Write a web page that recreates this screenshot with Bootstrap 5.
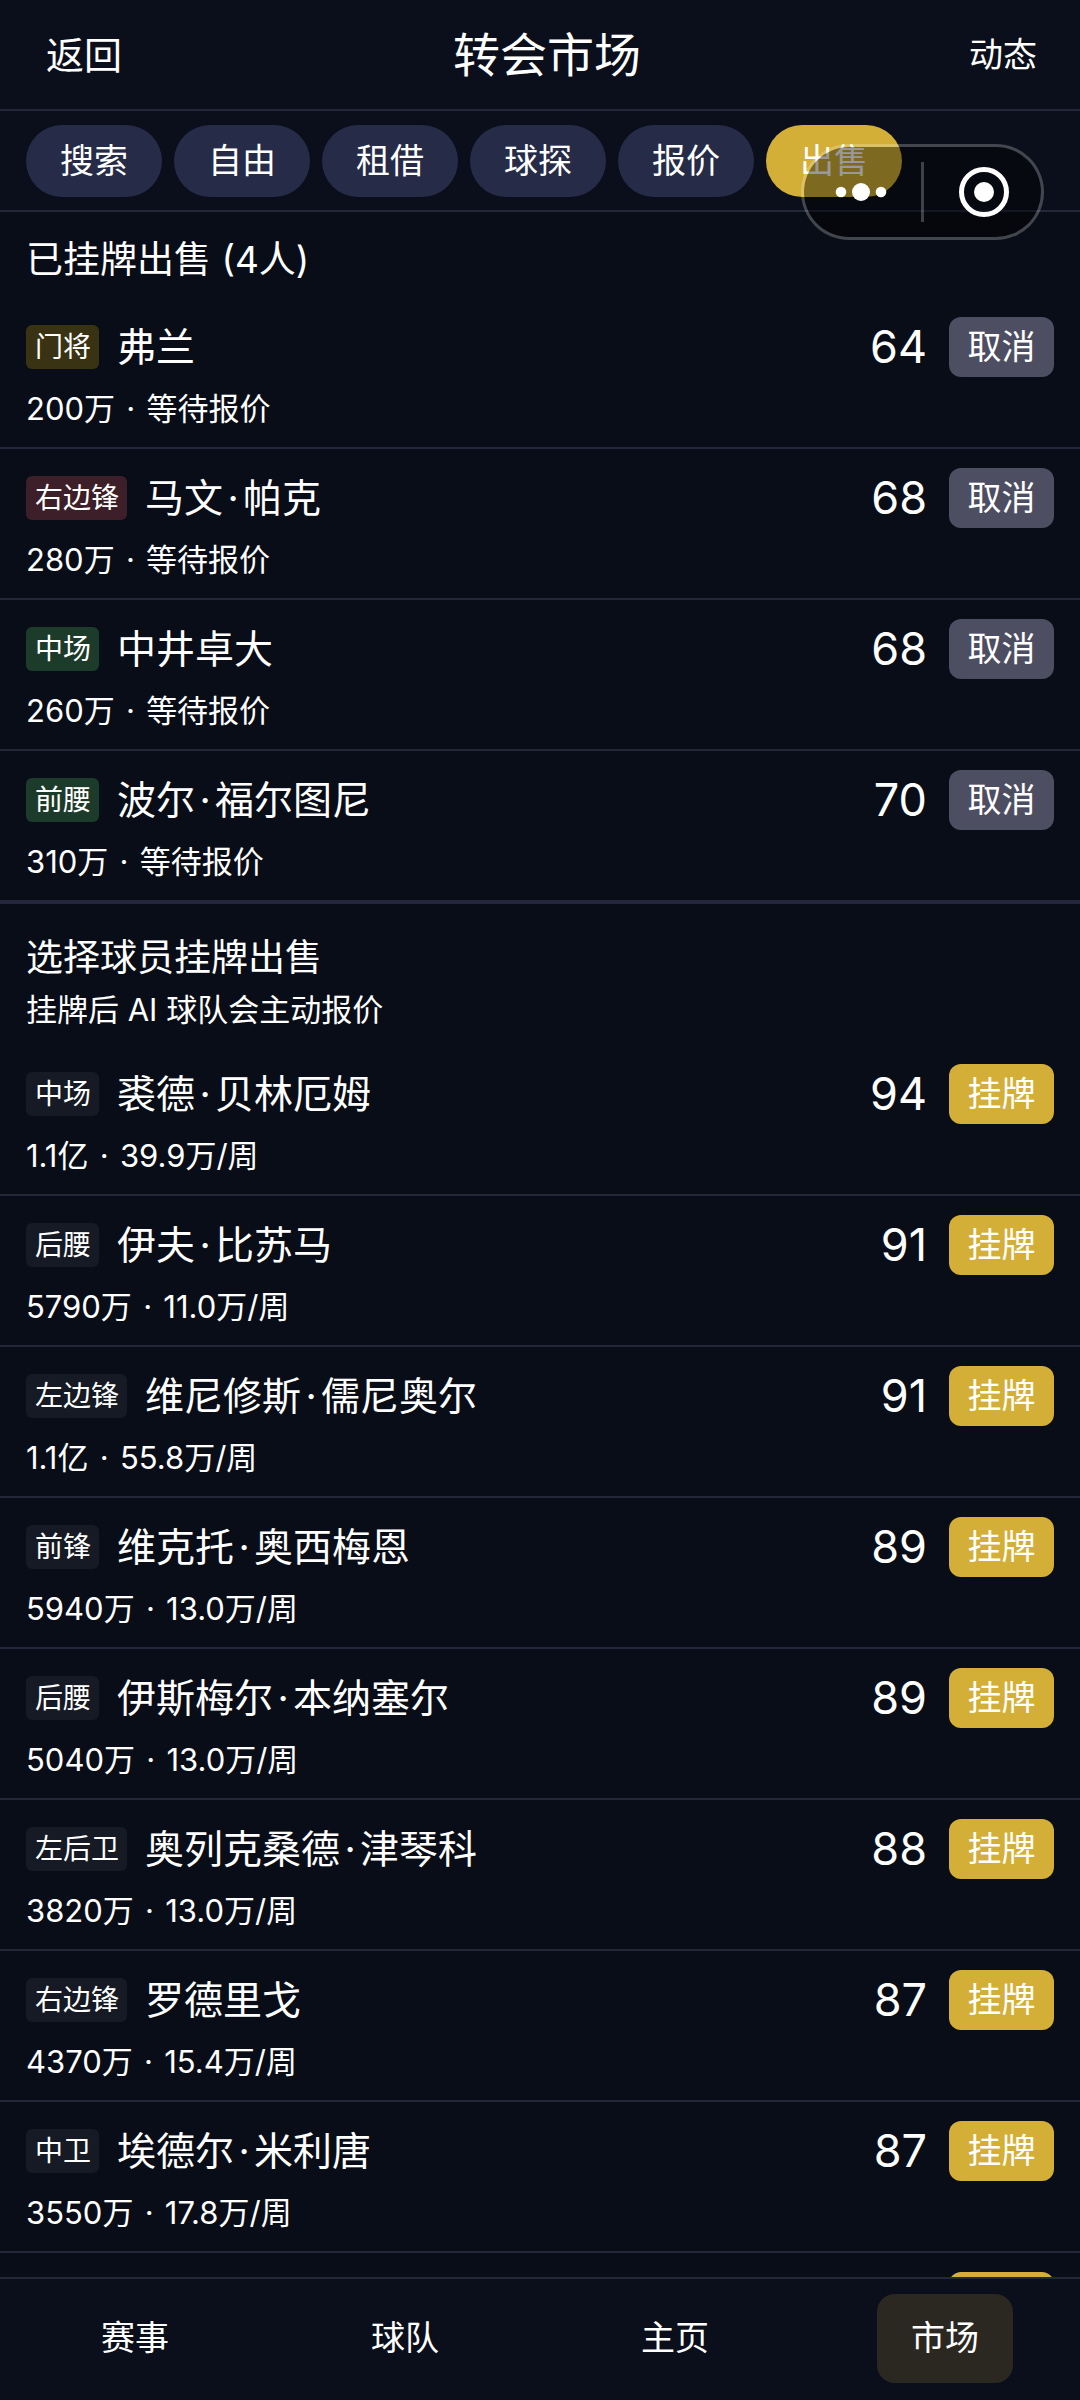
<!DOCTYPE html>
<html lang="zh-CN">
<head>
<meta charset="utf-8">
<meta name="viewport" content="width=device-width, initial-scale=1">
<title>转会市场</title>
<link href="https://cdn.jsdelivr.net/npm/bootstrap@5.3.0/dist/css/bootstrap.min.css" rel="stylesheet">
<style>
  :root { --line: #22273a; --gold: #d3af37; }
  body { background: #090d17; color: #fff; font-family: Inter, "Noto Sans CJK SC", sans-serif; font-size: 34px; line-height: 48px; }
  .btn { --bs-btn-color: #fff; --bs-btn-hover-color: #fff; --bs-btn-active-color: #fff; --bs-btn-border-width: 0; font-size: 34px; line-height: 48px; white-space: nowrap; }
  .topbar, .tabs, .bottombar { background: #0b0f1b; }
  .topbar { height: 111px; padding: 0 26px; border-bottom: 2px solid var(--line); }
  .topbar h1 { font-size: 47px; line-height: 64px; font-weight: 400; }
  .back-btn { font-size: 38px; padding: 0 20px; }
  .feed-btn { padding: 0 17px; }
  .tabs { padding: 14px 26px 13px; gap: 12px; border-bottom: 2px solid var(--line); }
  .tab-pill { padding: 12px 34px; background: #262c47; }
  .tab-pill.active, .list-btn { background: var(--gold) !important; }
  .feed { scrollbar-width: none; }
  .feed::-webkit-scrollbar { display: none; }
  .feed h2 { font-size: 37px; line-height: 48px; font-weight: 400; }
  .head-listed { padding: 24px 26px 14px; }
  .head-pick { padding: 30px 26px 11px; border-top: 2px solid #23283e; }
  .note { font-size: 31px; line-height: 48px; }
  .player { padding: 19px 26px 14px; border-bottom: 2px solid var(--line); }
  .player-name { font-size: 39px; line-height: 60px; }
  .pos { font-size: 28px; line-height: 44px; padding: 0 8px 0 9px; border-radius: 6px; margin-right: 18px; background: #151a25; }
  .pos-gk { background: #393213; }
  .pos-fw { background: #3c1f28; }
  .pos-mf { background: #1d3b2a; }
  .rating { font-size: 45px; line-height: 60px; margin-right: 22px; }
  .row-btn { min-width: 105px; min-height: 60px; padding: 6px 18px; border-radius: 12px; background: #4e4e62; }
  .mid { display: inline-block; width: 20px; text-align: center; }
  .note .mid { width: 14px; }
  .bottombar { border-top: 2px solid var(--line); padding: 15px 0 17px; }
  .nav-tab { color: #fff; padding: 20px 34px 21px; border-radius: 18px; text-decoration: none; }
  .nav-tab.active { background: #2b2822; }
  .capsule { top: 144px; right: 36px; width: 243px; height: 96px; border: 3px solid rgba(255,255,255,.23); background: rgba(0,0,0,.4); background-clip: padding-box; gap: 3px; }
  .capsule button { flex: 1 1 0; color: #fff; line-height: 0; }
  .capsule-rule { width: 3px; height: 60px; background: rgba(255,255,255,.23); }
</style>
<script src="https://cdn.jsdelivr.net/npm/bootstrap@5.3.0/dist/js/bootstrap.bundle.min.js"></script>
</head>
<body class="vh-100 d-flex flex-column overflow-hidden">

<header class="topbar d-flex align-items-center justify-content-between flex-shrink-0">
  <button type="button" class="btn back-btn">返回</button>
  <h1 class="mb-0">转会市场</h1>
  <button type="button" class="btn feed-btn">动态</button>
</header>

<div class="tabs d-flex flex-shrink-0">
  <button type="button" class="btn rounded-pill tab-pill">搜索</button>
  <button type="button" class="btn rounded-pill tab-pill">自由</button>
  <button type="button" class="btn rounded-pill tab-pill">租借</button>
  <button type="button" class="btn rounded-pill tab-pill">球探</button>
  <button type="button" class="btn rounded-pill tab-pill">报价</button>
  <button type="button" class="btn rounded-pill tab-pill active">出售</button>
</div>

<!-- Mini-program capsule floating over the tabs -->
<div class="capsule position-absolute rounded-pill d-flex align-items-center">
  <button type="button" class="btn p-0" aria-label="更多">
    <svg width="52" height="20" viewBox="0 0 52 20" fill="currentColor"><circle cx="6" cy="10" r="5.3"/><circle cx="26" cy="10" r="9"/><circle cx="46" cy="10" r="5.3"/></svg>
  </button>
  <span class="capsule-rule"></span>
  <button type="button" class="btn p-0" aria-label="关闭">
    <svg width="50" height="50" viewBox="0 0 50 50"><circle cx="25" cy="25" r="22.5" fill="none" stroke="currentColor" stroke-width="5"/><circle cx="25" cy="25" r="10" fill="currentColor"/></svg>
  </button>
</div>

<main class="feed flex-fill overflow-auto">
  <section>
    <div class="head-listed"><h2 class="mb-0">已挂牌出售 (4人)</h2></div>
    <ul class="list-unstyled mb-0">
      <li class="player"><div class="d-flex align-items-center mb-2"><span class="pos pos-gk">门将</span><span class="player-name flex-fill">弗兰</span><span class="rating">64</span><button type="button" class="btn row-btn">取消</button></div><div class="note">200万 <span class="mid">·</span> 等待报价</div></li>
      <li class="player"><div class="d-flex align-items-center mb-2"><span class="pos pos-fw">右边锋</span><span class="player-name flex-fill">马文<span class="mid">·</span>帕克</span><span class="rating">68</span><button type="button" class="btn row-btn">取消</button></div><div class="note">280万 <span class="mid">·</span> 等待报价</div></li>
      <li class="player"><div class="d-flex align-items-center mb-2"><span class="pos pos-mf">中场</span><span class="player-name flex-fill">中井卓大</span><span class="rating">68</span><button type="button" class="btn row-btn">取消</button></div><div class="note">260万 <span class="mid">·</span> 等待报价</div></li>
      <li class="player"><div class="d-flex align-items-center mb-2"><span class="pos pos-mf">前腰</span><span class="player-name flex-fill">波尔<span class="mid">·</span>福尔图尼</span><span class="rating">70</span><button type="button" class="btn row-btn">取消</button></div><div class="note">310万 <span class="mid">·</span> 等待报价</div></li>
    </ul>
  </section>
  <section>
    <div class="head-pick"><h2 class="mb-1">选择球员挂牌出售</h2><p class="note mb-0">挂牌后 AI 球队会主动报价</p></div>
    <ul class="list-unstyled mb-0">
      <li class="player"><div class="d-flex align-items-center mb-2"><span class="pos">中场</span><span class="player-name flex-fill">裘德<span class="mid">·</span>贝林厄姆</span><span class="rating">94</span><button type="button" class="btn row-btn list-btn">挂牌</button></div><div class="note">1.1亿 <span class="mid">·</span> 39.9万/周</div></li>
      <li class="player"><div class="d-flex align-items-center mb-2"><span class="pos">后腰</span><span class="player-name flex-fill">伊夫<span class="mid">·</span>比苏马</span><span class="rating">91</span><button type="button" class="btn row-btn list-btn">挂牌</button></div><div class="note">5790万 <span class="mid">·</span> 11.0万/周</div></li>
      <li class="player"><div class="d-flex align-items-center mb-2"><span class="pos">左边锋</span><span class="player-name flex-fill">维尼修斯<span class="mid">·</span>儒尼奥尔</span><span class="rating">91</span><button type="button" class="btn row-btn list-btn">挂牌</button></div><div class="note">1.1亿 <span class="mid">·</span> 55.8万/周</div></li>
      <li class="player"><div class="d-flex align-items-center mb-2"><span class="pos">前锋</span><span class="player-name flex-fill">维克托<span class="mid">·</span>奥西梅恩</span><span class="rating">89</span><button type="button" class="btn row-btn list-btn">挂牌</button></div><div class="note">5940万 <span class="mid">·</span> 13.0万/周</div></li>
      <li class="player"><div class="d-flex align-items-center mb-2"><span class="pos">后腰</span><span class="player-name flex-fill">伊斯梅尔<span class="mid">·</span>本纳塞尔</span><span class="rating">89</span><button type="button" class="btn row-btn list-btn">挂牌</button></div><div class="note">5040万 <span class="mid">·</span> 13.0万/周</div></li>
      <li class="player"><div class="d-flex align-items-center mb-2"><span class="pos">左后卫</span><span class="player-name flex-fill">奥列克桑德<span class="mid">·</span>津琴科</span><span class="rating">88</span><button type="button" class="btn row-btn list-btn">挂牌</button></div><div class="note">3820万 <span class="mid">·</span> 13.0万/周</div></li>
      <li class="player"><div class="d-flex align-items-center mb-2"><span class="pos">右边锋</span><span class="player-name flex-fill">罗德里戈</span><span class="rating">87</span><button type="button" class="btn row-btn list-btn">挂牌</button></div><div class="note">4370万 <span class="mid">·</span> 15.4万/周</div></li>
      <li class="player"><div class="d-flex align-items-center mb-2"><span class="pos">中卫</span><span class="player-name flex-fill">埃德尔<span class="mid">·</span>米利唐</span><span class="rating">87</span><button type="button" class="btn row-btn list-btn">挂牌</button></div><div class="note">3550万 <span class="mid">·</span> 17.8万/周</div></li>
      <li class="player"><div class="d-flex justify-content-end"><button type="button" class="btn row-btn list-btn" aria-label="挂牌"></button></div></li>
    </ul>
  </section>
</main>

<nav class="bottombar row g-0 flex-shrink-0 text-center">
  <div class="col d-flex justify-content-center"><a class="nav-tab" href="#">赛事</a></div>
  <div class="col d-flex justify-content-center"><a class="nav-tab" href="#">球队</a></div>
  <div class="col d-flex justify-content-center"><a class="nav-tab" href="#">主页</a></div>
  <div class="col d-flex justify-content-center"><a class="nav-tab active" href="#" aria-current="page">市场</a></div>
</nav>
</body>
</html>
